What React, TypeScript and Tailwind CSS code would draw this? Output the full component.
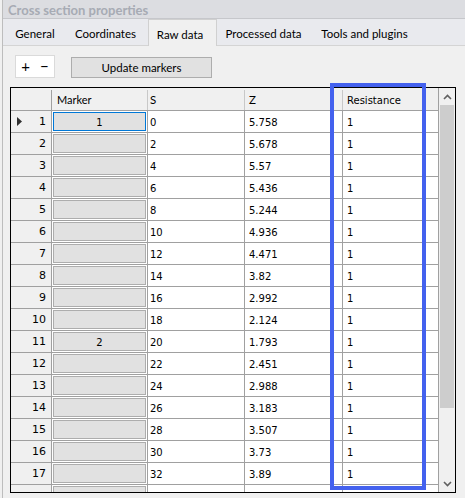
import React from 'react';

// rows of the raw data grid: marker, S, Z
const rows: [string, string, string][] = [
  ['1', '0', '5.758'],
  ['', '2', '5.678'],
  ['', '4', '5.57'],
  ['', '6', '5.436'],
  ['', '8', '5.244'],
  ['', '10', '4.936'],
  ['', '12', '4.471'],
  ['', '14', '3.82'],
  ['', '16', '2.992'],
  ['', '18', '2.124'],
  ['2', '20', '1.793'],
  ['', '22', '2.451'],
  ['', '24', '2.988'],
  ['', '26', '3.183'],
  ['', '28', '3.507'],
  ['', '30', '3.73'],
  ['', '32', '3.89'],
  ['', '', ''],
];

const ui = { fontFamily: 'Lato, "Open Sans", sans-serif' };
const cell = { fontFamily: '"DejaVu Sans", Verdana, sans-serif' };

function Chevron({ up }: { up?: boolean }) {
  return (
    <svg width="9" height="6" viewBox="0 0 9 6">
      <polyline
        points={up ? '1,5 4.5,1.5 8,5' : '1,1 4.5,4.5 8,1'}
        fill="none"
        stroke="#606060"
        strokeWidth="1.6"
      />
    </svg>
  );
}

export default function App() {
  return (
    <div className="relative w-[465px] h-[498px] overflow-hidden bg-[#f0f0f0] text-black" style={ui}>
      <div className="ml-[2px] h-full border-l border-[#bdbdbd] flex flex-col">
        {/* title bar */}
        <div className="h-[19px] bg-[#dcdde1] border-b border-[#c6c7cb] pl-[5px] pt-[2px] flex items-center">
          <span className="text-[13px] font-bold text-[#a7abb4] leading-none">Cross section properties</span>
        </div>

        {/* tabs */}
        <div className="h-[27px] bg-[#e9eaee] flex items-end">
          <div className="h-[26px] flex-1 flex items-end border-b border-[#d4d4d4] pl-[2px] text-[11.5px]">
            <div className="w-[60px] h-full flex items-center justify-center pt-[3px]">General</div>
            <div className="w-[81px] h-full flex items-center justify-center pt-[3px]">Coordinates</div>
            <div className="w-[2px]" />
            <div className="w-[69px] h-[27px] -mb-px flex items-center justify-center pr-[5px] pt-[4px] bg-[#f0f0f0] border border-b-0 border-[#d0d0d0]">
              Raw data
            </div>
            <div className="w-[93px] h-full flex items-center justify-center pt-[3px]">Processed data</div>
            <div className="w-[109px] h-full flex items-center justify-center pt-[3px]">Tools and plugins</div>
          </div>
        </div>

        {/* toolbar */}
        <div className="mt-[9px] ml-[12px] flex items-end gap-[16px]">
          <div className="w-[40px] h-[23px] bg-white border border-[#dadada] flex items-center justify-center gap-[10px] text-[15px] leading-none">
            <span>+</span>
            <span>−</span>
          </div>
          <div className="w-[141px] h-[21px] bg-[#e1e1e1] border border-[#adadad] flex items-center justify-center pt-[1px] text-[11.5px]">
            Update markers
          </div>
        </div>

        {/* data grid */}
        <div className="mt-[9px] ml-[7px] w-[446px] h-[406px] border border-black bg-white flex overflow-hidden" style={cell}>
          <div className="w-[427px] flex flex-col">
            <div className="h-[23px] shrink-0 flex bg-[#f0f0f0] border-b border-[#a0a0a0] text-[10px] pt-[2px]">
              <div className="w-[41px] border-r border-[#a0a0a0]" />
              <div className="w-[96px] flex items-center pl-[5px] border-r border-[#c8c8c8] text-[11px]" style={ui}>Marker</div>
              <div className="w-[97px] flex items-center pl-[2px] border-r border-[#c8c8c8] text-[11.5px]" style={ui}>S</div>
              <div className="w-[98px] flex items-center pl-[4px] border-r border-[#c8c8c8] text-[11.5px]" style={ui}>Z</div>
              <div className="w-[95px] flex items-center pl-[4px]">Resistance</div>
            </div>
            {rows.map(([marker, s, z], i) => (
              <div key={i} className="h-[22px] shrink-0 flex border-b border-[#a0a0a0] text-[10px]">
                <div className="w-[41px] bg-[#f0f0f0] border-r border-[#a0a0a0] flex items-center justify-between pl-[6px] pr-[5px] pt-[2px]">
                  {i === 0 ? (
                    <svg width="5" height="9" viewBox="0 0 5 9" className="-mt-[2px]">
                      <polygon points="0,0 5,4.5 0,9" fill="#303030" />
                    </svg>
                  ) : (
                    <span />
                  )}
                  <span className="text-[11px]">{i < 17 ? i + 1 : ''}</span>
                </div>
                <div className="w-[96px] border-r border-[#a0a0a0] p-[1px]">
                  <div
                    className={
                      'h-full flex items-center justify-center pt-[2px] bg-[#e1e1e1] border ' +
                      (i === 0 ? 'border-[#0078d7]' : 'border-[#adadad]')
                    }
                  >
                    {marker}
                  </div>
                </div>
                <div className="w-[97px] border-r border-[#a0a0a0] flex items-center pl-[2px] pt-[2px]">{s}</div>
                <div className="w-[98px] border-r border-[#a0a0a0] flex items-center pl-[4px] pt-[2px]">{z}</div>
                <div className="w-[95px] flex items-center pl-[4px] pt-[2px]">{i < 17 ? '1' : ''}</div>
              </div>
            ))}
          </div>

          {/* vertical scrollbar */}
          <div className="w-[17px] h-full bg-[#f0f0f0] border-l border-[#a0a0a0] flex flex-col">
            <div className="h-[17px] shrink-0 flex items-center justify-center">
              <Chevron up />
            </div>
            <div className="mx-[1px] h-[303px] shrink-0 bg-[#cdcdcd]" />
            <div className="flex-1" />
            <div className="h-[17px] shrink-0 flex items-center justify-center">
              <Chevron />
            </div>
          </div>
        </div>
      </div>

      {/* highlight around the Resistance column */}
      <div className="absolute left-[330px] top-[83px] w-[96px] h-[407px] border-4 border-[#4361ee]" />
    </div>
  );
}
